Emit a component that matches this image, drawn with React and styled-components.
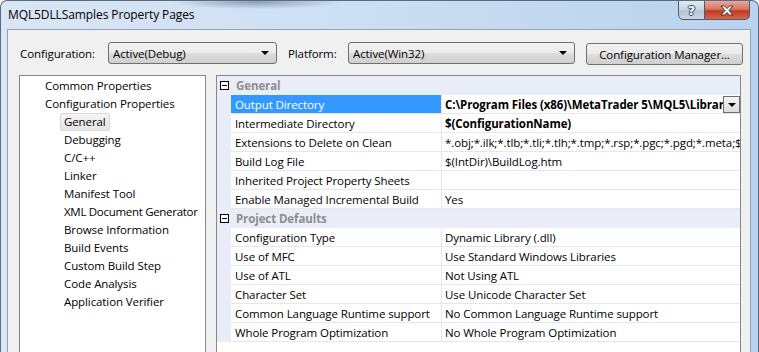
import React from "react"
import styled, { createGlobalStyle } from "styled-components"

const GlobalStyle = createGlobalStyle`
  body {
    margin: 0;
    font-family: "Open Sans", "Noto Sans", sans-serif;
    font-size: 11.5px;
    letter-spacing: -0.1px;
    color: #000;
  }
`

const Window = styled.div`
  width: 759px;
  height: 352px;
  box-sizing: border-box;
  border: 1px solid #5b6a7f;
  border-bottom: none;
  border-radius: 7px 7px 0 0;
  background: linear-gradient(90deg, #d9e6f4 0%, #cddff2 45%, #b9d2ed 100%);
  display: flex;
  flex-direction: column;
  overflow: hidden;
`

const TitleBar = styled.div`
  height: 28px;
  flex: none;
  display: flex;
  align-items: flex-start;
  justify-content: space-between;
  padding: 0 8px 0 7px;
  background: radial-gradient(ellipse 85px 7px at 255px 1px, rgba(55, 80, 115, 0.45), transparent);
`

const Title = styled.div`
  font-size: 12px;
  line-height: 28px;
`

const CaptionButtons = styled.div`
  display: flex;
  margin-top: -1px;
`

const CaptionButton = styled.div`
  width: ${p => (p.$close ? 45 : 27)}px;
  height: 20px;
  box-sizing: border-box;
  border: 1px solid #4a5a70;
  border-left: ${p => (p.$close ? "none" : "1px solid #4a5a70")};
  border-radius: ${p => (p.$close ? "0 0 5px 0" : "0 0 0 5px")};
  background: ${p =>
    p.$close
      ? "linear-gradient(180deg, #e9a99a 0%, #d7765f 45%, #c2391f 55%, #d8654a 100%)"
      : "linear-gradient(180deg, #e2eaf3 0%, #c9d6e4 45%, #b4c5d8 55%, #c6d6e6 100%)"};
  display: flex;
  align-items: center;
  justify-content: center;
  color: #fff;
  font-family: "DejaVu Sans", sans-serif;
  font-weight: bold;
  font-size: 13px;
  text-shadow: 0 0 1px #3a4a5e, 1px 0 0 #3a4a5e, -1px 0 0 #3a4a5e, 0 1px 0 #3a4a5e, 0 -1px 0 #3a4a5e;
`

const Client = styled.div`
  flex: 1;
  margin: 0 7px 0 6px;
  border: 1px solid #91a3b9;
  border-bottom: none;
  background: #f0f0f0;
  display: flex;
  flex-direction: column;
  min-height: 0;
`

const Toolbar = styled.div`
  display: flex;
  align-items: center;
  padding: 12px 0 0 12px;
  height: 22px;
  flex: none;
`

const FieldLabel = styled.div`
  width: ${p => p.$w}px;
  margin-left: ${p => p.$ml || 0}px;
  flex: none;
`

const Combo = styled.div`
  width: ${p => p.$w}px;
  height: 22px;
  box-sizing: border-box;
  border: 1px solid #707070;
  border-radius: 3px;
  background: linear-gradient(180deg, #f2f2f2 0%, #ebebeb 50%, #dddddd 50%, #cfcfcf 100%);
  display: flex;
  align-items: center;
  padding: 0 7px 0 4px;
  flex: none;
`

const ComboText = styled.span`
  flex: 1;
`

const Arrow = styled.span`
  width: 0;
  height: 0;
  border-left: 4px solid transparent;
  border-right: 4px solid transparent;
  border-top: 4px solid #000;
`

const Button = styled.div`
  margin-left: 11px;
  margin-top: 2px;
  width: 157px;
  height: 22px;
  box-sizing: border-box;
  border: 1px solid #707070;
  border-radius: 3px;
  background: linear-gradient(180deg, #f2f2f2 0%, #ebebeb 50%, #dddddd 50%, #cfcfcf 100%);
  display: flex;
  align-items: center;
  justify-content: center;
  flex: none;
`

const Body = styled.div`
  flex: 1;
  display: flex;
  gap: 10px;
  padding: 11px 9px 0 11px;
  min-height: 0;
`

const TreePane = styled.div`
  width: 187px;
  flex: none;
  box-sizing: border-box;
  border: 1px solid #828790;
  border-bottom: none;
  background: #fff;
  padding-top: 1px;
  overflow: hidden;
`

const TreeItem = styled.div`
  height: 18px;
  padding-left: ${p => (p.$level === 2 ? 40 : 21)}px;
  display: flex;
  align-items: center;
  white-space: nowrap;
`

const TreeLabel = styled.span`
  box-sizing: border-box;
  height: 18px;
  line-height: 16px;
  padding: 0 3px;
  border: 1px solid ${p => (p.$selected ? "#d9d9d9" : "transparent")};
  border-radius: 2px;
  background: ${p => (p.$selected ? "linear-gradient(180deg, #f4f4f4, #e5e5e5)" : "transparent")};
  letter-spacing: ${p => (p.$tight ? "-0.3px" : "inherit")};
`

const Grid = styled.div`
  flex: 1;
  box-sizing: border-box;
  border: 1px solid #828790;
  border-bottom: none;
  background: #fff;
  overflow: hidden;
`

const CategoryRow = styled.div`
  height: 19px;
  display: flex;
  align-items: center;
  background: #e9edf8;
`

const Expander = styled.div`
  width: 9px;
  height: 9px;
  box-sizing: border-box;
  border: 1px solid #000;
  margin: 0 5px 0 3px;
  display: flex;
  align-items: center;
  justify-content: center;
  background: #fff;
  &::after {
    content: "";
    width: 5px;
    height: 1px;
    background: #000;
  }
`

const CategoryName = styled.div`
  font-weight: bold;
  color: #8d8d8d;
  padding-left: 2px;
`

const PropRow = styled.div`
  height: 19px;
  display: grid;
  grid-template-columns: 14px 211px 1fr;
`

const Gutter = styled.div`
  background: #e9edf8;
`

const NameCell = styled.div`
  box-sizing: border-box;
  border-bottom: 1px solid #e3e7f1;
  border-right: 1px solid #e3e7f1;
  padding-left: 4px;
  display: flex;
  align-items: center;
  white-space: nowrap;
  overflow: hidden;
  background: ${p => (p.$selected ? "#3399ff" : "transparent")};
  color: ${p => (p.$selected ? "#fff" : "#000")};
`

const ValueCell = styled.div`
  box-sizing: border-box;
  border-bottom: 1px solid #e3e7f1;
  padding-left: 3px;
  display: flex;
  align-items: center;
  min-width: 0;
  font-weight: ${p => (p.$bold ? "bold" : "normal")};
`

const ValueText = styled.span`
  flex: 1;
  min-width: 0;
  white-space: nowrap;
  overflow: hidden;
`

const DropButton = styled.div`
  width: 17px;
  height: 17px;
  box-sizing: border-box;
  flex: none;
  border: 1px solid #6f6f6f;
  background: linear-gradient(180deg, #f4f4f4, #dcdcdc);
  display: flex;
  align-items: center;
  justify-content: center;
  margin-top: 1px;
`

const treeItems = [
  { label: "Common Properties", level: 1 },
  { label: "Configuration Properties", level: 1 },
  { label: "General", level: 2, selected: true },
  { label: "Debugging", level: 2 },
  { label: "C/C++", level: 2 },
  { label: "Linker", level: 2 },
  { label: "Manifest Tool", level: 2 },
  { label: "XML Document Generator", level: 2, tight: true },
  { label: "Browse Information", level: 2 },
  { label: "Build Events", level: 2 },
  { label: "Custom Build Step", level: 2 },
  { label: "Code Analysis", level: 2 },
  { label: "Application Verifier", level: 2 },
]

const categories = [
  {
    name: "General",
    rows: [
      { name: "Output Directory", value: "C:\\Program Files (x86)\\MetaTrader 5\\MQL5\\Libraries\\", bold: true, selected: true, drop: true },
      { name: "Intermediate Directory", value: "$(ConfigurationName)", bold: true },
      { name: "Extensions to Delete on Clean", value: "*.obj;*.ilk;*.tlb;*.tli;*.tlh;*.tmp;*.rsp;*.pgc;*.pgd;*.meta;$(TargetPath)" },
      { name: "Build Log File", value: "$(IntDir)\\BuildLog.htm" },
      { name: "Inherited Project Property Sheets", value: "" },
      { name: "Enable Managed Incremental Build", value: "Yes" },
    ],
  },
  {
    name: "Project Defaults",
    rows: [
      { name: "Configuration Type", value: "Dynamic Library (.dll)" },
      { name: "Use of MFC", value: "Use Standard Windows Libraries" },
      { name: "Use of ATL", value: "Not Using ATL" },
      { name: "Character Set", value: "Use Unicode Character Set" },
      { name: "Common Language Runtime support", value: "No Common Language Runtime support" },
      { name: "Whole Program Optimization", value: "No Whole Program Optimization" },
    ],
  },
]

const CloseIcon = () => (
  <svg width="14" height="11" viewBox="0 0 14 11">
    <path
      d="M1 1h3.5L7 3.5 9.5 1H13L9 5.5 13 10H9.5L7 7.5 4.5 10H1L5 5.5z"
      fill="#fff"
      stroke="#3b3b3b"
      strokeWidth="1"
      strokeLinejoin="round"
    />
  </svg>
)

const App = () => {
  return (
    <>
      <GlobalStyle />
      <Window>
        <TitleBar>
          <Title>MQL5DLLSamples Property Pages</Title>
          <CaptionButtons>
            <CaptionButton>?</CaptionButton>
            <CaptionButton $close>
              <CloseIcon />
            </CaptionButton>
          </CaptionButtons>
        </TitleBar>
        <Client>
          <Toolbar>
            <FieldLabel $w={88}>Configuration:</FieldLabel>
            <Combo $w={169}>
              <ComboText>Active(Debug)</ComboText>
              <Arrow />
            </Combo>
            <FieldLabel $w={60} $ml={11}>Platform:</FieldLabel>
            <Combo $w={227}>
              <ComboText>Active(Win32)</ComboText>
              <Arrow />
            </Combo>
            <Button>Configuration Manager...</Button>
          </Toolbar>
          <Body>
            <TreePane>
              {treeItems.map(item => (
                <TreeItem key={item.label} $level={item.level}>
                  <TreeLabel $selected={item.selected} $tight={item.tight}>{item.label}</TreeLabel>
                </TreeItem>
              ))}
            </TreePane>
            <Grid>
              {categories.map(cat => (
                <div key={cat.name}>
                  <CategoryRow>
                    <Expander />
                    <CategoryName>{cat.name}</CategoryName>
                  </CategoryRow>
                  {cat.rows.map(row => (
                    <PropRow key={row.name}>
                      <Gutter />
                      <NameCell $selected={row.selected}>{row.name}</NameCell>
                      <ValueCell $bold={row.bold}>
                        <ValueText>{row.value}</ValueText>
                        {row.drop && (
                          <DropButton>
                            <Arrow />
                          </DropButton>
                        )}
                      </ValueCell>
                    </PropRow>
                  ))}
                </div>
              ))}
            </Grid>
          </Body>
        </Client>
      </Window>
    </>
  )
}

export default App
